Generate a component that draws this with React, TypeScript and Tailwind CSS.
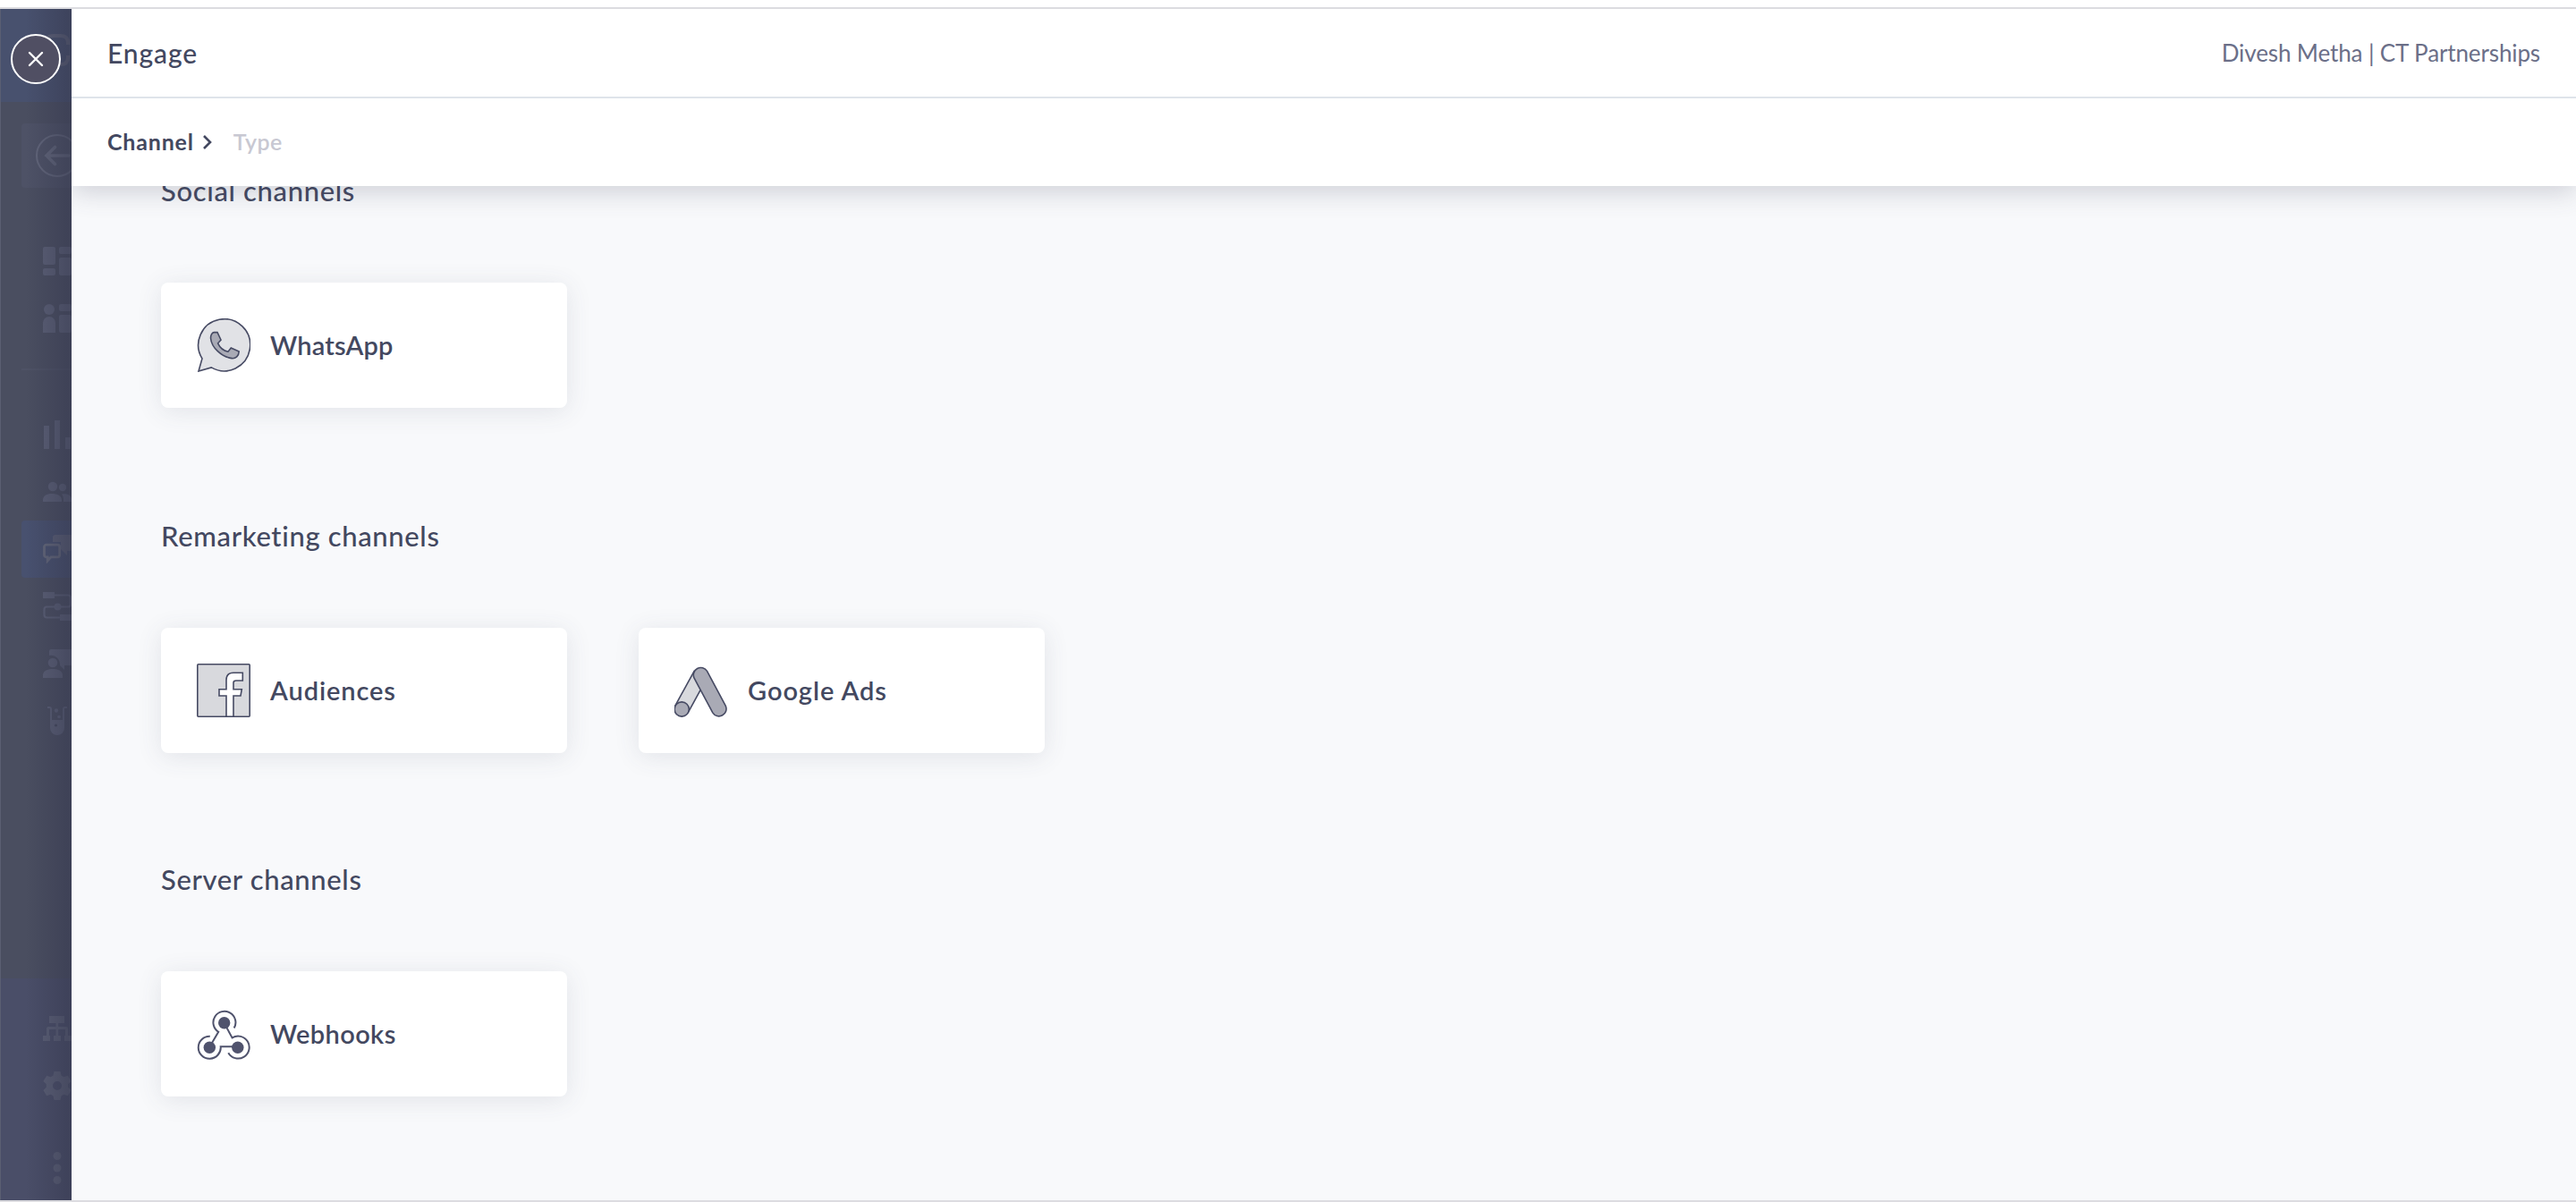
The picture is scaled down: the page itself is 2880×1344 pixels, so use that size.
import type { ReactNode } from "react";

interface Channel {
  title: string;
  icon: ReactNode;
  titleClassName: string;
}

interface ChannelGroup {
  title: string;
  className: string;
  channels: Channel[];
}

function WhatsAppIcon() {
  return (
    <svg viewBox="0 0 60 60" className="size-15 shrink-0" fill="none" stroke="#464a63" strokeWidth="1.6">
      <path
        d="M6 44.9A29 29 0 1 1 16.3 54.9L2 59Z"
        fill="#e1e2e6"
      />
      <path
        d="M19.2 15.6L23 15.6L27 24L23.6 27.8C25.5 32 29.5 36 35 37.2L38.3 33L47.2 37C47 42 43.5 45.2 39 44.6C27.5 43 16.5 32.5 15.6 22.5C15.3 18.8 17 15.9 19.2 15.6Z"
        fill="#a9aab5"
      />
    </svg>
  );
}

function FacebookIcon() {
  return (
    <svg viewBox="0 0 60 60" className="size-15 shrink-0" fill="none" stroke="#464a63" strokeWidth="1.6">
      <rect x="0.8" y="0.8" width="58.4" height="58.4" rx="1" fill="#d8d9dd" />
      <path
        d="M33 59V36H25V28.7H33V18.5C33 13 36 10.3 41 10.3H51.3V19H44C41.8 19 41 19.8 41 21.5V28.7H50.3L49 36H41V59"
        fill="#fff"
      />
      <path d="M32 59.2H42" />
    </svg>
  );
}

function GoogleAdsIcon() {
  return (
    <svg viewBox="0 0 60 60" className="size-15 shrink-0" fill="none" stroke="#464a63" strokeWidth="1.6">
      <path d="M22 8.6L0.9 47L15.2 55L36.5 16Z" fill="#d8d9dd" />
      <path
        d="M22.1 16.2A8.2 8.2 0 0 1 36.5 8.4L57.2 47.1A8.2 8.2 0 0 1 42.8 54.9Z"
        fill="#a9aab5"
      />
      <circle cx="8.2" cy="51" r="8.1" fill="#a9aab5" />
    </svg>
  );
}

function WebhooksIcon() {
  return (
    <svg viewBox="0 0 60 60" className="size-15 shrink-0" fill="none" stroke="#50536d" strokeWidth="2">
      <path d="M41.7 23.6A12.5 12.5 0 1 0 24.2 27.8L15 43.5" />
      <path d="M14.8 32.8A12.5 12.5 0 1 0 26.7 44.2H46" />
      <path d="M35.3 51.2A12.5 12.5 0 1 0 39.6 34.4L30.7 18" />
      <g fill="#50536d" stroke="none">
        <circle cx="30.7" cy="17.7" r="6.7" />
        <circle cx="14.3" cy="45.3" r="6.7" />
        <circle cx="45.8" cy="45.3" r="6.7" />
      </g>
    </svg>
  );
}

const groups: ChannelGroup[] = [
  {
    title: "Social channels",
    className: "mb-[124px]",
    channels: [
      { title: "WhatsApp", icon: <WhatsAppIcon />, titleClassName: "tracking-[0.15px]" },
    ],
  },
  {
    title: "Remarketing channels",
    className: "mb-[122px]",
    channels: [
      { title: "Audiences", icon: <FacebookIcon />, titleClassName: "tracking-[0.9px]" },
      { title: "Google Ads", icon: <GoogleAdsIcon />, titleClassName: "tracking-[0.95px]" },
    ],
  },
  {
    title: "Server channels",
    className: "",
    channels: [
      { title: "Webhooks", icon: <WebhooksIcon />, titleClassName: "tracking-[0.4px]" },
    ],
  },
];

function NavItem({ children, active }: { children: ReactNode; active?: boolean }) {
  return (
    <div
      className={
        active
          ? "flex h-16 items-center rounded-l bg-[#48516f] pl-6"
          : "flex h-16 items-center pl-6"
      }
    >
      <svg viewBox="0 0 32 32" className="size-8 shrink-0" fill="#5d6177">
        {children}
      </svg>
    </div>
  );
}

function Sidebar() {
  return (
    <aside className="relative flex w-20 shrink-0 flex-col overflow-hidden bg-[#4a4e60]">
      <div className="flex h-[104px] shrink-0 bg-[#48516e] pt-7 pl-12">
        <svg viewBox="0 0 32 40" className="h-10 w-8" fill="none" stroke="#5f6379" strokeWidth="4">
          <path d="M2 16V12Q2 2 12 2H20Q28 2 28 10V12M28 24V26Q28 34 20 34H12Q2 34 2 26V12" />
        </svg>
      </div>

      <div className="mt-6 ml-6 flex h-18 w-40 shrink-0 items-center rounded bg-[#4e5266] pl-4">
        <svg viewBox="0 0 48 48" className="size-12 shrink-0" fill="none" stroke="#64687c">
          <circle cx="24" cy="24" r="23" strokeWidth="2" />
          <path d="M37 24H12M21.5 14.5L12 24L21.5 33.5" strokeWidth="3.6" strokeLinecap="round" />
        </svg>
      </div>

      <nav className="mt-[50px] ml-6 w-40">
        <NavItem>
          <rect width="14" height="20" rx="2" />
          <rect y="24" width="14" height="8" rx="2" />
          <rect x="18" width="14" height="8" rx="2" />
          <rect x="18" y="12" width="14" height="20" rx="2" />
        </NavItem>
        <NavItem>
          <circle cx="7" cy="6" r="6" />
          <path d="M0 32V21A7 7 0 0 1 14 21V32Z" />
          <rect x="18" width="14" height="8" rx="2" />
          <rect x="18" y="12" width="14" height="20" rx="2" />
        </NavItem>
        <div className="mt-6 mb-10 h-0.5 bg-[#4e5265]" />
        <NavItem>
          <rect x="1" y="6" width="6" height="26" />
          <rect x="13" width="6" height="32" />
          <rect x="25" y="19" width="6" height="13" />
        </NavItem>
        <NavItem>
          <circle cx="11" cy="10" r="5.2" />
          <circle cx="22" cy="11" r="4.2" />
          <path d="M0 27V25C0 20.5 4 18 10 18S21 20.5 21 25V27Z" />
          <path d="M21 18.5C28 17.5 32 20 32 25V27H23V25C23 22 22.5 20.5 21 18.5Z" />
        </NavItem>
        <NavItem active>
          <path d="M11 8V3A3 3 0 0 1 14 0H34V18H27V23L20 16V8Z" />
          <path
            d="M4 11.2H16.5A2.2 2.2 0 0 1 18.7 13.4V22.6A2.2 2.2 0 0 1 16.5 24.8H9L5.2 29V24.8H4A2.2 2.2 0 0 1 1.5 22.6V13.4A2.2 2.2 0 0 1 4 11.2Z"
            fill="none"
            stroke="#666a7c"
            strokeWidth="2.8"
          />
        </NavItem>
        <NavItem>
          <rect width="13" height="7" />
          <rect x="19" y="25" width="13" height="7" />
          <circle cx="16.5" cy="16.5" r="4" />
          <path
            d="M13 3.5H28Q31 3.5 31 6.5V13.5Q31 16.5 28 16.5H4.5Q1.5 16.5 1.5 19.5V25.5Q1.5 28.5 4.5 28.5H20"
            fill="none"
            stroke="#5d6177"
            strokeWidth="2.2"
          />
        </NavItem>
        <NavItem>
          <circle cx="11" cy="15" r="5.3" />
          <path d="M0 32V29C0 24.5 4.5 22 11 22S22 24.5 22 29V32Z" />
          <path d="M7 7V2A2 2 0 0 1 9 0H34V18H24V23L19 18C19.5 11 14 6 7 7Z" />
        </NavItem>
        <NavItem>
          <path
            d="M5 1H7.5Q9 1 9 3V24A7 7 0 0 0 23 24V3Q23 1 24.5 1H27"
            fill="none"
            stroke="#5d6177"
            strokeWidth="2"
          />
          <path d="M9 15H23V24A7 7 0 0 1 9 24Z" />
          <circle cx="15" cy="4.5" r="2.2" />
          <circle cx="18" cy="11.5" r="1.8" />
          <circle cx="14.5" cy="21" r="1.6" fill="#44485c" />
        </NavItem>
      </nav>

      <div className="mt-auto h-62 shrink-0 bg-[#4a4e68] pt-6 pl-6">
        <NavItem>
          <path d="M7 2H24V10H17.2V14H26Q28 14 28 16V24H32V30H24V24H25V17H17.2V24H20V30H12V24H14.5V17H7V24H8V30H0V24H4V16Q4 14 6 14H14.5V10H7Z" />
        </NavItem>
        <NavItem>
          <path
            fillRule="evenodd"
            d="M12.5 0H19.5L20.5 4.6L23.3 6.2L27.8 4.7L31.6 11L28.2 14.2V17.8L31.6 21L27.8 27.3L23.3 25.8L20.5 27.4L19.5 32H12.5L11.5 27.4L8.7 25.8L4.2 27.3L0.4 21L3.8 17.8V14.2L0.4 11L4.2 4.7L8.7 6.2L11.5 4.6ZM16 11A5 5 0 1 0 16 21A5 5 0 0 0 16 11Z"
          />
        </NavItem>
        <svg viewBox="0 0 32 40" className="mt-10 ml-6 h-10 w-8" fill="#5d6177">
          <circle cx="16" cy="6.5" r="4.5" />
          <circle cx="16" cy="20" r="4.5" />
          <circle cx="16" cy="33.5" r="4.5" />
        </svg>
      </div>

      {/* drop shadow cast by the panel */}
      <div className="absolute inset-0 border-l border-[#5a5e72] bg-linear-to-r from-[#363950]/0 from-35% to-[#363950]/60" />

      <button className="absolute top-7 left-3 flex size-14 items-center justify-center rounded-full border-2 border-white bg-[#504f63]">
        <svg viewBox="0 0 18 18" className="size-[18px]" stroke="#fff" strokeWidth="2.4" strokeLinecap="round">
          <path d="M2 2L16 16M16 2L2 16" />
        </svg>
      </button>
    </aside>
  );
}

function ChannelCard({ title, icon, titleClassName }: Channel) {
  return (
    <div className="flex h-35 w-[454px] items-center gap-[22px] rounded-lg bg-white pl-10 shadow-[0_4px_28px_rgba(67,72,96,0.12)]">
      {icon}
      <span className={`text-[29px] leading-10 font-semibold ${titleClassName}`}>{title}</span>
    </div>
  );
}

export default function App() {
  return (
    <div className="flex h-[1344px] w-[2880px] flex-col overflow-hidden bg-white pt-2 font-['Lato','Liberation_Sans',sans-serif] text-[#434860]">
      <div className="flex min-h-0 flex-1 border-y-2 border-[#dcdce0]">
        <Sidebar />
        <main className="flex min-w-0 flex-1 flex-col overflow-hidden bg-[#f8f9fb]">
          <header className="relative z-10 shrink-0 bg-white shadow-[0_6px_28px_rgba(67,72,96,0.24)]">
            <div className="flex h-25 items-center justify-between border-b-2 border-[#dfe4ea] px-10">
              <h1 className="text-[30px] font-medium tracking-[0.9px]">Engage</h1>
              <p className="text-[26px] tracking-[-0.12px] text-[#6b6f88]">Divesh Metha | CT Partnerships</p>
            </div>
            <div className="flex h-[98px] items-center px-10 text-[25px]">
              <span className="font-bold tracking-[0.8px]">Channel</span>
              <svg viewBox="0 0 12 18" className="ml-[9px] h-[18px] w-3" fill="none" stroke="#434860" strokeWidth="2.6">
                <path d="M2 2L9 9L2 16" />
              </svg>
              <span className="ml-[23px] font-semibold tracking-[0.5px] text-[#c8c8d2]">Type</span>
            </div>
          </header>

          {/* list is scrolled slightly under the header */}
          <div className="-mt-3.5 px-25">
            {groups.map((group) => (
              <section key={group.title} className={group.className}>
                <h2 className="mb-[83px] text-[31px] leading-[39px] font-medium tracking-[0.65px]">{group.title}</h2>
                <div className="flex gap-20">
                  {group.channels.map((channel) => (
                    <ChannelCard key={channel.title} {...channel} />
                  ))}
                </div>
              </section>
            ))}
          </div>
        </main>
      </div>
    </div>
  );
}
